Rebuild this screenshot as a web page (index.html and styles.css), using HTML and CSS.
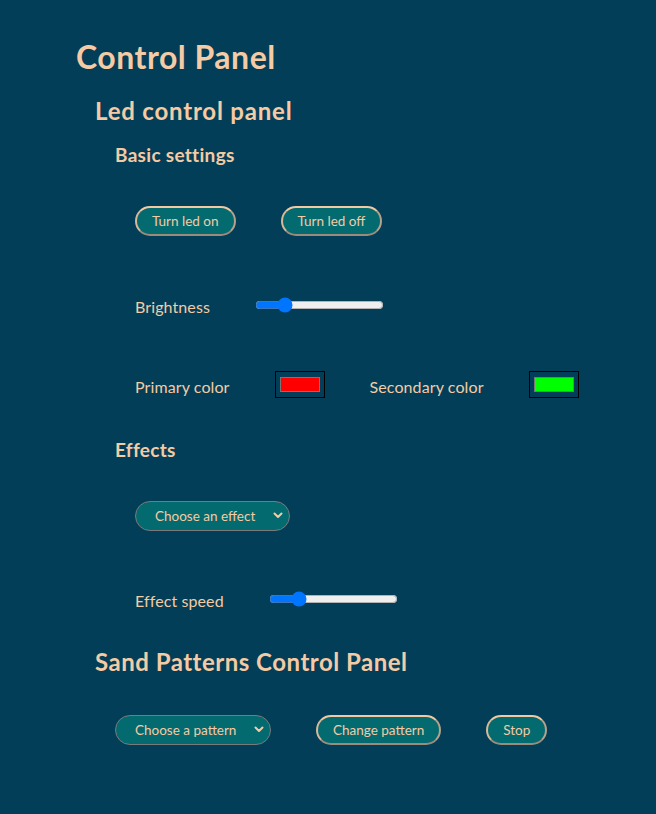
FILE: index.html
```html
<!DOCTYPE html>
<html lang="en">
<head>
<meta charset="utf-8">
<title>Control Panel</title>
<link rel="stylesheet" href="styles.css">
</head>
<body>
<main class="page">
  <h1 class="title">Control Panel</h1>
  <section class="panel">
    <h2 class="panel-title led-title">Led control panel</h2>
    <section class="group">
      <h3 class="group-title">Basic settings</h3>
      <div class="row row-buttons">
        <button class="btn" type="button">Turn led on</button>
        <button class="btn" type="button">Turn led off</button>
      </div>
      <div class="row row-brightness">
        <label class="label" for="brightness">Brightness</label>
        <input class="range" id="brightness" type="range" min="0" max="255" value="50">
      </div>
      <div class="row row-colors">
        <label class="label" for="primary">Primary color</label>
        <input class="color" id="primary" type="color" value="#ff0000">
        <label class="label" for="secondary">Secondary color</label>
        <input class="color" id="secondary" type="color" value="#00ff00">
      </div>
    </section>
    <section class="group">
      <h3 class="group-title effects-title">Effects</h3>
      <div class="row row-select">
        <span class="select-wrap select-effect">
          <select class="select">
            <option>Choose an effect</option>
          </select>
          <svg class="chev" width="10" height="7" viewBox="0 0 10 7" aria-hidden="true"><path d="M1.5 1.5 L5 5 L8.5 1.5" fill="none" stroke="currentColor" stroke-width="2" stroke-linecap="round" stroke-linejoin="round"/></svg>
        </span>
      </div>
      <div class="row row-speed">
        <label class="label" for="speed">Effect speed</label>
        <input class="range" id="speed" type="range" min="0" max="255" value="50">
      </div>
    </section>
  </section>
  <section class="panel">
    <h2 class="panel-title sand-title">Sand Patterns Control Panel</h2>
    <div class="row row-sand">
      <span class="select-wrap select-pattern">
        <select class="select">
          <option>Choose a pattern</option>
        </select>
        <svg class="chev" width="10" height="7" viewBox="0 0 10 7" aria-hidden="true"><path d="M1.5 1.5 L5 5 L8.5 1.5" fill="none" stroke="currentColor" stroke-width="2" stroke-linecap="round" stroke-linejoin="round"/></svg>
      </span>
      <button class="btn btn-change" type="button">Change pattern</button>
      <button class="btn btn-stop" type="button">Stop</button>
    </div>
  </section>
</main>
</body>
</html>
```
FILE: styles.css
```css
html, body {
  margin: 0;
  padding: 0;
  background: #023e58;
}
body {
  color: #f4cba4;
  font-family: Lato, "Open Sans", sans-serif;
  min-height: 814px;
}
.page {
  padding: 37px 0 0 76px;
}
.title {
  margin: 0;
  font-size: 32px;
  font-weight: 700;
  line-height: 40px;
  letter-spacing: 0.5px;
}
.panel {
  margin-left: 19px;
}
.panel-title {
  margin: 19px 0 0;
  font-size: 24px;
  font-weight: 700;
  line-height: 30px;
  letter-spacing: 0.5px;
}
.led-title {
  letter-spacing: 0.8px;
}
.sand-title {
  margin-top: 37px;
}
.group {
  margin-left: 20px;
}
.group-title {
  margin: 17px 0 0;
  font-size: 19px;
  font-weight: 700;
  line-height: 24px;
  letter-spacing: 0.3px;
}
.effects-title {
  margin-top: 40px;
}
.row {
  display: flex;
  align-items: center;
  gap: 45px;
  margin-left: 20px;
}
.row-buttons {
  margin-top: 39px;
}
.row-brightness {
  margin-top: 58px;
}
.row-colors {
  margin-top: 55px;
}
.row-select {
  margin-top: 39px;
}
.row-speed {
  margin-top: 57px;
}
.row-sand {
  margin-left: 20px;
  margin-top: 38px;
}
.label {
  font-size: 16px;
  letter-spacing: 0.1px;
}
.row-brightness .label,
.row-speed .label {
  padding-top: 3px;
}
.row-colors .label {
  padding-top: 3px;
}
.btn {
  height: 30px;
  padding: 0 15px;
  background: #036a70;
  color: #f4cba4;
  font-family: Lato, "Open Sans", sans-serif;
  font-size: 13.5px;
  border: 2px solid;
  border-color: #f2c9a3 #b9a08a #9c8a7a #d9b898;
  border-radius: 15px;
}
.range {
  width: 129px;
  margin: 0;
  accent-color: #0075ff;
}
.color {
  width: 50px;
  height: 27px;
  margin: 0;
  padding: 1px 2px;
  border: 1px solid #000;
  background: transparent;
}
.select-wrap {
  position: relative;
  display: inline-flex;
  color: #f4cba4;
}
.select-effect {
  width: 155px;
}
.select-pattern {
  width: 156px;
}
.select {
  appearance: none;
  -webkit-appearance: none;
  width: 100%;
  height: 30px;
  padding: 0 20px 0 19px;
  background: #036a70;
  color: #f4cba4;
  font-family: Lato, "Open Sans", sans-serif;
  font-size: 13.5px;
  border: 1px solid #7a7a7a;
  border-radius: 15px;
}
.chev {
  position: absolute;
  right: 7px;
  top: 11px;
  pointer-events: none;
}
```
